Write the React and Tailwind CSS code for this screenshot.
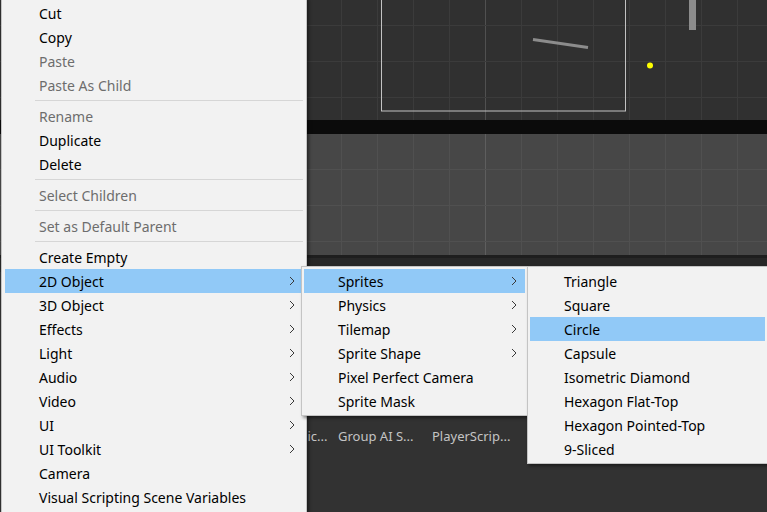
import React from "react";

const mainItems = [
  { label: "Cut" },
  { label: "Copy" },
  { label: "Paste", disabled: true },
  { label: "Paste As Child", disabled: true },
  { sep: true },
  { label: "Rename", disabled: true },
  { label: "Duplicate" },
  { label: "Delete" },
  { sep: true },
  { label: "Select Children", disabled: true },
  { sep: true },
  { label: "Set as Default Parent", disabled: true },
  { sep: true },
  { label: "Create Empty" },
  { label: "2D Object", sub: true, active: true },
  { label: "3D Object", sub: true },
  { label: "Effects", sub: true },
  { label: "Light", sub: true },
  { label: "Audio", sub: true },
  { label: "Video", sub: true },
  { label: "UI", sub: true },
  { label: "UI Toolkit", sub: true },
  { label: "Camera" },
  { label: "Visual Scripting Scene Variables" },
];

const objectItems = [
  { label: "Sprites", sub: true, active: true },
  { label: "Physics", sub: true },
  { label: "Tilemap", sub: true },
  { label: "Sprite Shape", sub: true },
  { label: "Pixel Perfect Camera" },
  { label: "Sprite Mask" },
];

const spriteItems = [
  { label: "Triangle" },
  { label: "Square" },
  { label: "Circle", active: true },
  { label: "Capsule" },
  { label: "Isometric Diamond" },
  { label: "Hexagon Flat-Top" },
  { label: "Hexagon Pointed-Top" },
  { label: "9-Sliced" },
];

const gridX = [17, 53, 89, 125, 161, 197, 233, 269, 305, 341, 377, 413, 449, 485, 521, 557, 593, 629, 665, 701, 737];

function Chevron() {
  return (
    <svg width="6" height="10" viewBox="0 0 6 10" className="shrink-0">
      <polyline points="1,1 5,5 1,9" fill="none" stroke="#3a3a3a" strokeWidth="1" />
    </svg>
  );
}

function MenuItem({ item }) {
  if (item.sep) {
    return (
      <div className="h-[7px] flex items-center pl-[30px]">
        <div className="h-px w-full bg-[#d6d6d6]" />
      </div>
    );
  }
  return (
    <div className={`h-6 flex items-center pl-[34px] pr-[8px] ${item.active ? "bg-[#91c9f7]" : ""}`}>
      <span className={`flex-1 whitespace-nowrap leading-6 pt-px ${item.disabled ? "text-[#6d6d6d]" : "text-black"}`}>
        {item.label}
      </span>
      {item.sub && <Chevron />}
    </div>
  );
}

function Menu({ items, className }) {
  return (
    <div className={`absolute border border-[#c4c4c4] bg-[#f2f2f2] shadow-[2px_2px_3px_rgba(0,0,0,0.45)] ${className}`}>
      {items.map((item, i) => (
        <MenuItem key={i} item={item} />
      ))}
    </div>
  );
}

function SceneGrid({ height, bg, line, axis, rows }) {
  return (
    <svg width="767" height={height} className="block">
      <rect width="767" height={height} fill={bg} />
      {gridX.map((x) => (
        <line key={x} x1={x + 0.5} y1="0" x2={x + 0.5} y2={height} stroke={x === 485 ? axis : line} />
      ))}
      {rows.map((y) => (
        <line key={y} x1="0" y1={y + 0.5} x2="767" y2={y + 0.5} stroke={line} />
      ))}
    </svg>
  );
}

export default function App() {
  return (
    <div className="relative w-[767px] h-[512px] overflow-hidden bg-[#323232] font-['Noto_Sans','Open_Sans',sans-serif] text-[14px]">
      {/* scene view */}
      <div className="flex flex-col h-full">
        <div className="relative h-[120px]">
          <SceneGrid height={120} bg="#303030" line="#3b3b3b" axis="#505050" rows={[25, 61, 97]} />
          <svg width="767" height="120" className="absolute inset-0">
            <rect x="381.5" y="-5" width="244" height="116" fill="none" stroke="#c2c2c2" />
            <line x1="533" y1="39.5" x2="588" y2="47.5" stroke="#8c8c8c" strokeWidth="3" />
            <rect x="689" y="0" width="7" height="30" fill="#8c8c8c" />
            <circle cx="650" cy="65.5" r="3" fill="#ffff00" />
          </svg>
        </div>
        <div className="h-[14px] bg-[#0b0b0b]" />
        <SceneGrid height={121} bg="#474747" line="#505050" axis="#5e5e5e" rows={[35, 71, 107]} />
        <div className="h-[3px] bg-[#1e1e1e]" />
        <div className="h-[14px] bg-[#272727]" />
        <div className="flex-1 bg-[#323232] pt-[155px] pl-[240px] flex text-[13px] text-[#c4c4c4]">
          <div className="w-[98px] whitespace-nowrap">Enemy Logic...</div>
          <div className="w-[94px] whitespace-nowrap">Group AI S...</div>
          <div className="w-[94px] whitespace-nowrap">PlayerScrip...</div>
        </div>
      </div>

      {/* context menu */}
      <Menu items={mainItems} className="left-[1px] top-[-3px] w-[306px] p-[3px]" />
      <Menu items={objectItems} className="left-[301px] top-[266px] w-[227px] p-[2px]" />
      <Menu items={spriteItems} className="left-[527px] top-[266px] w-[241px] p-[2px]" />
    </div>
  );
}
